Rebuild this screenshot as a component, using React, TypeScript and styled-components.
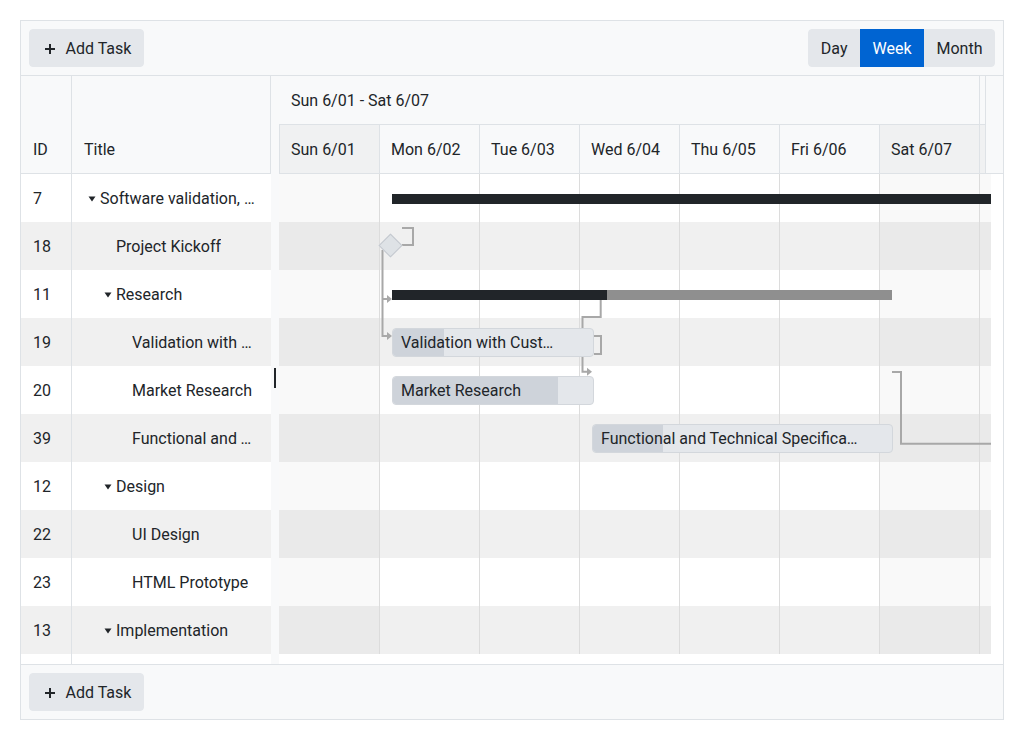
import React from 'react';
import styled, { createGlobalStyle } from 'styled-components';

const GlobalStyle = createGlobalStyle`
  html, body {
    margin: 0;
    padding: 0;
    background: #ffffff;
  }
  body {
    font-family: Roboto, "Liberation Sans", sans-serif;
    font-size: 16px;
    color: #212529;
  }
  * {
    box-sizing: border-box;
  }
`;

const ROW_H = 48;
const DAY_W = 100;

type Task = {
  id: number;
  title: string;
  level: number;
  parent?: boolean;
  kind?: 'summary' | 'task' | 'milestone';
  start?: number; // px from timeline start
  end?: number;
  progress?: number; // px of done part
};

const tasks: Task[] = [
  { id: 7, title: 'Software validation, research and implementation', level: 0, parent: true, kind: 'summary', start: 113, end: 730, progress: 730 },
  { id: 18, title: 'Project Kickoff', level: 1, kind: 'milestone', start: 111 },
  { id: 11, title: 'Research', level: 1, parent: true, kind: 'summary', start: 113, end: 613, progress: 215 },
  { id: 19, title: 'Validation with Customers', level: 2, kind: 'task', start: 113, end: 315, progress: 51 },
  { id: 20, title: 'Market Research', level: 2, kind: 'task', start: 113, end: 315, progress: 165 },
  { id: 39, title: 'Functional and Technical Specification', level: 2, kind: 'task', start: 313, end: 614, progress: 70 },
  { id: 12, title: 'Design', level: 1, parent: true },
  { id: 22, title: 'UI Design', level: 2 },
  { id: 23, title: 'HTML Prototype', level: 2 },
  { id: 13, title: 'Implementation', level: 1, parent: true },
];

const days = [
  { label: 'Sun 6/01', weekend: true },
  { label: 'Mon 6/02' },
  { label: 'Tue 6/03' },
  { label: 'Wed 6/04' },
  { label: 'Thu 6/05' },
  { label: 'Fri 6/06' },
  { label: 'Sat 6/07', weekend: true },
  { label: '', weekend: true },
];

const Page = styled.div`
  padding: 20px;
`;

const Gantt = styled.div`
  width: 984px;
  height: 700px;
  border: 1px solid #dee2e6;
  display: flex;
  flex-direction: column;
  background: #ffffff;
`;

const Toolbar = styled.div<{ $bottom?: boolean }>`
  flex: none;
  height: 55px;
  display: flex;
  align-items: center;
  justify-content: space-between;
  padding: 0 8px;
  background: #f8f9fa;
  border-top: ${(p) => (p.$bottom ? '1px solid #dee2e6' : 'none')};
  border-bottom: ${(p) => (p.$bottom ? 'none' : '1px solid #dee2e6')};
`;

const Button = styled.button<{ $selected?: boolean }>`
  height: 38px;
  display: inline-flex;
  align-items: center;
  gap: 8px;
  padding: 2px 11.5px 0;
  border: 1px solid ${(p) => (p.$selected ? '#0064d2' : '#e4e7eb')};
  border-radius: 4px;
  background: ${(p) => (p.$selected ? '#0064d2' : '#e4e7eb')};
  color: ${(p) => (p.$selected ? '#ffffff' : '#212529')};
  font-family: inherit;
  font-size: 16px;
  line-height: 24px;
  cursor: pointer;
`;

const ButtonGroup = styled.div`
  display: flex;
  & > ${Button} {
    border-radius: 0;
  }
  & > ${Button}:first-child {
    border-radius: 4px 0 0 4px;
  }
  & > ${Button}:last-child {
    border-radius: 0 4px 4px 0;
  }
`;

const Content = styled.div`
  flex: 1;
  display: flex;
  min-height: 0;
`;

const TreePane = styled.div`
  width: 250px;
  flex: none;
  display: flex;
  flex-direction: column;
`;

const TreeHeader = styled.div`
  height: 98px;
  flex: none;
  display: flex;
  background: #f8f9fa;
  border-bottom: 1px solid #dee2e6;
`;

const HeaderCell = styled.div<{ $w: number }>`
  width: ${(p) => p.$w}px;
  flex: none;
  display: flex;
  align-items: flex-end;
  padding: 0 12px 11px;
  line-height: 24px;
  border-right: 1px solid #dee2e6;
`;

const TreeBody = styled.div`
  flex: 1;
  display: flex;
  flex-direction: column;
  background: linear-gradient(to right, transparent 50px, #dee2e6 50px, #dee2e6 51px, transparent 51px);
`;

const TreeRow = styled.div<{ $alt: boolean }>`
  height: ${ROW_H}px;
  display: flex;
  background: ${(p) => (p.$alt ? '#f0f0f0' : '#ffffff')};
`;

const IdCell = styled.div`
  width: 51px;
  flex: none;
  display: flex;
  align-items: center;
  padding: 0 12px;
  border-right: 1px solid #dee2e6;
`;

const TitleCell = styled.div<{ $level: number }>`
  width: 199px;
  flex: none;
  display: flex;
  align-items: center;
  padding: 0 12px 0 ${(p) => 12 + p.$level * 16}px;
  overflow: hidden;
`;

const Expander = styled.span`
  width: 16px;
  height: 16px;
  flex: none;
  display: inline-flex;
`;

const TitleText = styled.span`
  min-width: 0;
  overflow: hidden;
  white-space: nowrap;
  text-overflow: ellipsis;
`;

const Splitter = styled.div`
  width: 8px;
  flex: none;
  position: relative;
  background: #f8f9fa;
`;

const SplitterHandle = styled.span`
  position: absolute;
  left: 3px;
  top: 292px;
  width: 2px;
  height: 20px;
  background: #212529;
`;

const TimelinePane = styled.div`
  flex: 1;
  min-width: 0;
  display: flex;
  flex-direction: column;
`;

const TimelineHeader = styled.div`
  height: 98px;
  flex: none;
  display: flex;
  background: #f8f9fa;
  border-bottom: 1px solid #dee2e6;
`;

const HeaderScroll = styled.div`
  width: 707px;
  flex: none;
  overflow: hidden;
  border-right: 1px solid #dee2e6;
`;

const WeekRow = styled.div`
  height: 49px;
  display: flex;
  border-bottom: 1px solid #dee2e6;
`;

const DayRow = styled.div`
  height: 48px;
  display: flex;
  border-left: 1px solid #dee2e6;
`;

const WeekCell = styled.div`
  width: 701px;
  flex: none;
  display: flex;
  align-items: center;
  padding: 0 12px;
  border-right: 1px solid #dee2e6;
`;

const DayHeaderCell = styled.div<{ $weekend?: boolean }>`
  width: ${DAY_W}px;
  flex: none;
  display: flex;
  align-items: center;
  padding: 0 11px;
  white-space: nowrap;
  background: ${(p) => (p.$weekend ? 'rgba(0, 0, 0, 0.03)' : 'transparent')};
  border-right: 1px solid #dee2e6;
`;

const TimelineBody = styled.div`
  flex: 1;
  display: flex;
  min-height: 0;
`;

const BodyScroll = styled.div`
  width: 712px;
  flex: none;
  position: relative;
  overflow: hidden;
`;

const GridRow = styled.div<{ $alt: boolean }>`
  height: ${ROW_H}px;
  display: flex;
  padding-left: 1px;
  background: ${(p) => (p.$alt ? '#f0f0f0' : '#ffffff')};
`;

const GridCell = styled.div<{ $weekend?: boolean; $first?: boolean }>`
  width: ${DAY_W}px;
  flex: none;
  margin-left: ${(p) => (p.$first ? '-1px' : '0')};
  ${(p) => (p.$first ? 'width: 101px;' : '')}
  background: ${(p) => (p.$weekend ? 'rgba(0, 0, 0, 0.022)' : 'transparent')};
  border-right: 1px solid #dcdcdc;
`;

const Links = styled.svg`
  position: absolute;
  left: 0;
  top: 0;
  pointer-events: none;
`;

const TaskLayer = styled.div`
  position: absolute;
  inset: 0;
  display: flex;
  flex-direction: column;
`;

const Lane = styled.div`
  height: ${ROW_H}px;
  flex: none;
  position: relative;
`;

const SummaryBar = styled.div`
  position: absolute;
  top: 20px;
  height: 10px;
  background: #8f8f8f;
  overflow: hidden;
`;

const SummaryDone = styled.div`
  height: 100%;
  background: #212529;
`;

const TaskBar = styled.div`
  position: absolute;
  top: 10px;
  height: 29px;
  border: 1px solid #d3d7dc;
  border-radius: 4px;
  background: #e4e7eb;
  overflow: hidden;
  display: flex;
  align-items: center;
`;

const TaskProgress = styled.div`
  position: absolute;
  left: 0;
  top: 0;
  bottom: 0;
  background: #ced3da;
  border-radius: 3px 0 0 3px;
`;

const TaskLabel = styled.span`
  position: relative;
  min-width: 0;
  padding: 0 33px 0 8px;
  overflow: hidden;
  white-space: nowrap;
  text-overflow: ellipsis;
  line-height: 24px;
`;

const Milestone = styled.div`
  position: absolute;
  top: 15px;
  width: 17px;
  height: 17px;
  margin-left: -8.5px;
  transform: rotate(45deg);
  background: #dee2e6;
  border: 1px solid #c4c9cf;
`;

const Gutter = styled.div`
  flex: 1;
  background: #ffffff;
`;

const PlusIcon = () => (
  <svg width="16" height="16" viewBox="0 0 16 16" fill="#212529">
    <path d="M7 3h2v4h4v2H9v4H7V9H3V7h4z" />
  </svg>
);

const Caret = () => (
  <svg width="16" height="16" viewBox="0 0 16 16" fill="#212529">
    <path d="M4.5 6.5h7l-3.5 5z" />
  </svg>
);

const Arrow = ({ x, y }: { x: number; y: number }) => (
  <polygon points={`${x - 5},${y - 4} ${x},${y} ${x - 5},${y + 4}`} fill="#a8a8a8" />
);

const linkPaths = [
  'M123 71 H134 V54 H123',
  'M103.5 76 V162 H108',
  'M103.5 125 H108',
  'M321.7 126 V143 H303.5 V197.7 H308',
  'M315 162 H322 V180 H315',
  'M613 198 H622 V269.7 H712',
];

const AddTask = () => (
  <Button>
    <PlusIcon />
    Add Task
  </Button>
);

export default function App() {
  return (
    <Page>
      <GlobalStyle />
      <Gantt>
        <Toolbar>
          <AddTask />
          <ButtonGroup>
            <Button>Day</Button>
            <Button $selected>Week</Button>
            <Button>Month</Button>
          </ButtonGroup>
        </Toolbar>

        <Content>
          <TreePane>
            <TreeHeader>
              <HeaderCell $w={51}>ID</HeaderCell>
              <HeaderCell $w={199}>Title</HeaderCell>
            </TreeHeader>
            <TreeBody>
              {tasks.map((t, i) => (
                <TreeRow key={t.id} $alt={i % 2 === 1}>
                  <IdCell>{t.id}</IdCell>
                  <TitleCell $level={t.level}>
                    <Expander>{t.parent && <Caret />}</Expander>
                    <TitleText>{t.title}</TitleText>
                  </TitleCell>
                </TreeRow>
              ))}
            </TreeBody>
          </TreePane>

          <Splitter>
            <SplitterHandle />
          </Splitter>

          <TimelinePane>
            <TimelineHeader>
              <HeaderScroll>
                <WeekRow>
                  <WeekCell>Sun 6/01 - Sat 6/07</WeekCell>
                </WeekRow>
                <DayRow>
                  {days.map((d, i) => (
                    <DayHeaderCell key={i} $weekend={d.weekend}>
                      {d.label}
                    </DayHeaderCell>
                  ))}
                </DayRow>
              </HeaderScroll>
            </TimelineHeader>

            <TimelineBody>
              <BodyScroll>
                {tasks.map((t, i) => (
                  <GridRow key={t.id} $alt={i % 2 === 1}>
                    {days.map((d, j) => (
                      <GridCell key={j} $weekend={d.weekend} $first={j === 0} />
                    ))}
                  </GridRow>
                ))}

                <Links width={712} height={480} viewBox="0 0 712 480">
                  {linkPaths.map((d, i) => (
                    <path key={i} d={d} fill="none" stroke="#a8a8a8" strokeWidth={2} />
                  ))}
                  <Arrow x={113} y={125} />
                  <Arrow x={113} y={162} />
                  <Arrow x={313} y={197.7} />
                </Links>

                <TaskLayer>
                  {tasks.map((t) => (
                    <Lane key={t.id}>
                      {t.kind === 'summary' && (
                        <SummaryBar style={{ left: t.start, width: t.end! - t.start! }}>
                          <SummaryDone style={{ width: t.progress }} />
                        </SummaryBar>
                      )}
                      {t.kind === 'task' && (
                        <TaskBar style={{ left: t.start, width: t.end! - t.start! }}>
                          <TaskProgress style={{ width: t.progress }} />
                          <TaskLabel>{t.title}</TaskLabel>
                        </TaskBar>
                      )}
                      {t.kind === 'milestone' && <Milestone style={{ left: t.start }} />}
                    </Lane>
                  ))}
                </TaskLayer>
              </BodyScroll>
              <Gutter />
            </TimelineBody>
          </TimelinePane>
        </Content>

        <Toolbar $bottom>
          <AddTask />
        </Toolbar>
      </Gantt>
    </Page>
  );
}
